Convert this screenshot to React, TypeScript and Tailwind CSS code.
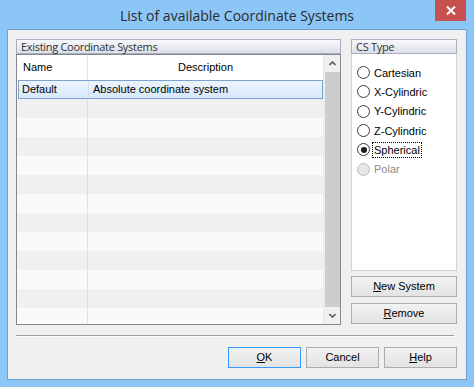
import clsx from "clsx";

const ui = "font-['Liberation_Sans',Arial,sans-serif]";
const segoe = "font-['Open_Sans','Noto_Sans',sans-serif]";

const csTypes = [
  { label: "Cartesian" },
  { label: "X-Cylindric" },
  { label: "Y-Cylindric" },
  { label: "Z-Cylindric" },
  { label: "Spherical", checked: true, focused: true },
  { label: "Polar", disabled: true },
];

function Chevron({ up }: { up?: boolean }) {
  return (
    <svg width="7" height="5" viewBox="0 0 7 5">
      <path
        d={up ? "M0.5 4 L3.5 1 L6.5 4" : "M0.5 1 L3.5 4 L6.5 1"}
        stroke="#606060"
        strokeWidth="1.6"
        fill="none"
      />
    </svg>
  );
}

function GroupHeader({ title }: { title: string }) {
  return (
    <div
      className={clsx(
        "h-[15px] shrink-0 border border-[#a9b0c2] bg-gradient-to-b from-[#f8f9fc] to-[#dcdfe9] pl-[4px] text-[11px] leading-[13px] tracking-[-0.3px] text-[#333]",
        segoe
      )}
    >
      {title}
    </div>
  );
}

function Button({
  children,
  width,
  primary,
}: {
  children: React.ReactNode;
  width: string;
  primary?: boolean;
}) {
  return (
    <div
      className={clsx(
        "flex h-[21px] items-center justify-center border bg-gradient-to-b from-[#f2f2f2] to-[#e3e3e3] text-[11px] text-black",
        primary ? "border-[#3399ff]" : "border-[#acacac]",
        width
      )}
    >
      {children}
    </div>
  );
}

function Radio({
  label,
  checked,
  disabled,
  focused,
}: {
  label: string;
  checked?: boolean;
  disabled?: boolean;
  focused?: boolean;
}) {
  return (
    <div className="flex h-[19.3px] items-center">
      <span
        className={clsx(
          "flex h-[13px] w-[13px] items-center justify-center rounded-full border",
          disabled ? "border-[#bcbcbc] bg-[#e6e6e6]" : "border-[#3c3c3c] bg-white"
        )}
      >
        {checked && <span className="h-[6px] w-[6px] rounded-full bg-[#1c1c1c]" />}
      </span>
      <span
        className={clsx(
          "ml-[2px] leading-[14px]",
          focused ? "border border-dotted border-black px-[1px]" : "border border-transparent px-[1px]",
          disabled ? "text-[#8a8a8a]" : "text-black"
        )}
      >
        {label}
      </span>
    </div>
  );
}

export default function App() {
  const rows = Array.from({ length: 13 }, (_, i) => i);

  return (
    <div className={clsx("flex h-[387px] w-[474px] flex-col bg-[#8cc6f7]", ui)}>
      <div className="relative flex h-[29px] shrink-0 items-center justify-center pt-[2px]">
        <span className={clsx("text-[14px] text-[#2b2b2b]", segoe)}>
          List of available Coordinate Systems
        </span>
        <div className="absolute right-[8px] top-0 flex h-[21px] w-[31px] items-center justify-center bg-[#c75050]">
          <svg width="10" height="9" viewBox="0 0 10 9">
            <path d="M1 0.5 L9 8.5 M9 0.5 L1 8.5" stroke="white" strokeWidth="2" />
          </svg>
        </div>
      </div>

      <div className="mx-[7px] mb-[7px] flex flex-1 flex-col border border-[#6f9fcc] bg-[#f0f0f0] px-[8px] pt-[9px]">
        <div className="flex h-[286px] gap-[10px]">
          <div className="flex w-[325px] flex-col">
            <GroupHeader title="Existing Coordinate Systems" />
            <div className="flex min-h-0 flex-1 border border-[#828790] bg-white text-[11px] text-black">
              <div className="flex min-w-0 flex-1 flex-col overflow-hidden">
                <div className="flex h-[25px] shrink-0 items-center">
                  <div className="w-[70px] pl-[6px]">Name</div>
                  <div className="h-full w-[1px] bg-[#e5e5e5]" />
                  <div className="flex-1 text-center">Description</div>
                </div>
                {rows.map((i) =>
                  i === 0 ? (
                    <div
                      key={i}
                      className="ml-[1px] flex h-[19px] shrink-0 items-center border border-[#7da2ce] bg-gradient-to-b from-[#ebf4fd] to-[#d7e8fb]"
                    >
                      <div className="w-[69px] pl-[3px]">Default</div>
                      <div className="h-full w-[1px] bg-[#d0def0]" />
                      <div className="flex-1 pl-[4px]">Absolute coordinate system</div>
                    </div>
                  ) : (
                    <div
                      key={i}
                      className={clsx(
                        "flex h-[19px] shrink-0",
                        i % 2 === 1 ? "bg-[#f0f0f0]" : "bg-[#fafafa]"
                      )}
                    >
                      <div className="w-[70px]" />
                      <div className="h-full w-[1px] bg-[#e0e0e0]" />
                    </div>
                  )
                )}
              </div>
              <div className="flex w-[17px] shrink-0 flex-col items-center border-l border-[#e8e8e8] bg-[#f0f0f0]">
                <div className="flex h-[17px] items-center justify-center">
                  <Chevron up />
                </div>
                <div className="w-[15px] flex-1 bg-[#cdcdcd]" />
                <div className="flex h-[17px] items-center justify-center">
                  <Chevron />
                </div>
              </div>
            </div>
          </div>

          <div className="flex w-[106px] flex-col">
            <GroupHeader title="CS Type" />
            <div className="flex-1 border border-t-0 border-[#cdd4e0] bg-white pl-[5px] pt-[9px] text-[11px]">
              {csTypes.map((t) => (
                <Radio key={t.label} {...t} />
              ))}
            </div>
            <div className="mt-[5px]">
              <Button width="w-[106px]">
                <span className="underline underline-offset-[1px]">N</span>ew System
              </Button>
            </div>
            <div className="mb-[1px] mt-[6px]">
              <Button width="w-[106px]">
                <span className="underline underline-offset-[1px]">R</span>emove
              </Button>
            </div>
          </div>
        </div>

        <div className="mt-[10px] h-[2px] w-[438px] border-b border-t border-b-white border-t-[#a0a0a0]" />

        <div className="mt-[10px] flex w-[441px] justify-end gap-[5px]">
          <Button width="w-[73px]" primary>
            <span className="underline underline-offset-[1px]">O</span>K
          </Button>
          <Button width="w-[73px]">Cancel</Button>
          <Button width="w-[73px]">
            <span className="underline underline-offset-[1px]">H</span>elp
          </Button>
        </div>
      </div>
    </div>
  );
}
